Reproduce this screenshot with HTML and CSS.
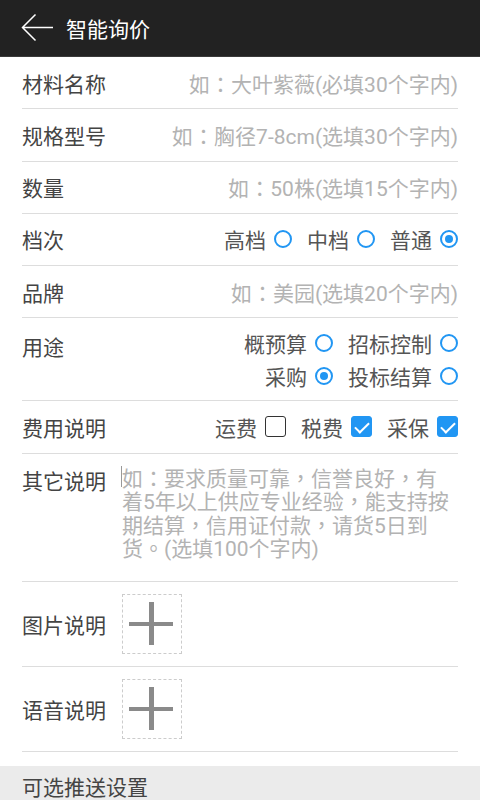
FILE: index.html
```html
<!DOCTYPE html>
<html lang="zh-CN">
<head>
    <meta charset="UTF-8">
    <meta name="viewport" content="width=device-width, initial-scale=1.0">
    <title>智能询价</title>
    <link rel="stylesheet" href="styles.css">
</head>
<body>
    <div class="header">
        <svg class="back" width="34" height="30" viewBox="0 0 34 30">
            <path d="M33 14.5H2.5M15.5 1.5L2.5 14.5l13 13" fill="none" stroke="#fff" stroke-width="1.5"/>
        </svg>
        <h1>智能询价</h1>
    </div>

    <div class="form">
        <div class="row">
            <span class="label">材料名称</span>
            <span class="hint" lang="zh-Hant">如：大叶紫薇(必填30个字内)</span>
        </div>
        <div class="row">
            <span class="label">规格型号</span>
            <span class="hint" lang="zh-Hant">如：胸径7-8cm(选填30个字内)</span>
        </div>
        <div class="row">
            <span class="label">数量</span>
            <span class="hint" lang="zh-Hant">如：50株(选填15个字内)</span>
        </div>
        <div class="row">
            <span class="label">档次</span>
            <div class="options">
                <span class="opt">高档<i class="radio"></i></span>
                <span class="opt">中档<i class="radio"></i></span>
                <span class="opt">普通<i class="radio on"></i></span>
            </div>
        </div>
        <div class="row">
            <span class="label">品牌</span>
            <span class="hint" lang="zh-Hant">如：美园(选填20个字内)</span>
        </div>
        <div class="row tall">
            <span class="label">用途</span>
            <div class="options-grid">
                <span class="opt">概预算<i class="radio"></i></span>
                <span class="opt">招标控制<i class="radio"></i></span>
                <span class="opt">采购<i class="radio on"></i></span>
                <span class="opt">投标结算<i class="radio"></i></span>
            </div>
        </div>
        <div class="row">
            <span class="label">费用说明</span>
            <div class="options">
                <span class="opt">运费<i class="check"></i></span>
                <span class="opt">税费<i class="check on"></i></span>
                <span class="opt">采保<i class="check on"></i></span>
            </div>
        </div>
        <div class="row memo">
            <span class="label">其它说明</span>
            <p class="memo-text" lang="zh-Hant">如：要求质量可靠，信誉良好，有着5年以上供应专业经验，能支持按期结算，信用证付款，请货5日到货。(选填100个字内)</p>
        </div>
        <div class="row media">
            <span class="label">图片说明</span>
            <div class="add"></div>
        </div>
        <div class="row media">
            <span class="label">语音说明</span>
            <div class="add"></div>
        </div>
    </div>

    <div class="section">可选推送设置</div>
</body>
</html>
```

FILE: styles.css
```css
*{
    margin: 0;
    padding: 0;
    box-sizing: border-box;
}

body{
    font-family: "Noto Sans CJK SC", "Noto Sans", sans-serif;
    background: #fff;
    color: #444;
    width: 480px;
    height: 800px;
    overflow: hidden;
}

.header{
    height: 57px;
    background: #222;
    border-bottom: 1px solid #3a3a3a;
    display: flex;
    align-items: center;
    padding-left: 20px;
}

.back{
    margin-right: 12px;
}

.header h1{
    color: #fff;
    font-size: 21px;
    font-weight: 400;
}

.form{
    padding: 0 22px;
}

.row{
    height: 52.25px;
    border-bottom: 1.5px solid #ddd;
    display: flex;
    align-items: center;
    justify-content: space-between;
}

.label{
    font-size: 21px;
    color: #444;
    white-space: nowrap;
}

.hint{
    font-family: Roboto, "Noto Sans CJK TC", sans-serif;
    font-size: 21px;
    color: #b3b3b3;
    white-space: nowrap;
}

.options{
    display: flex;
    gap: 15px;
}

.opt{
    font-size: 21px;
    color: #555;
    display: flex;
    align-items: center;
    gap: 8px;
}

.radio{
    width: 18px;
    height: 18px;
    border: 2.5px solid #2196f3;
    border-radius: 50%;
    display: inline-block;
    position: relative;
}

.radio.on::after{
    content: "";
    position: absolute;
    left: 2.5px;
    top: 2.5px;
    width: 8px;
    height: 8px;
    border-radius: 50%;
    background: #2196f3;
}

.check{
    width: 21px;
    height: 21px;
    border: 1.5px solid #333;
    border-radius: 3px;
    display: inline-block;
    position: relative;
}

.check.on{
    background: #2196f3;
    border-color: #2196f3;
}

.check.on::after{
    content: "";
    position: absolute;
    left: 3px;
    top: 2px;
    width: 12px;
    height: 6px;
    border-left: 2.5px solid #fff;
    border-bottom: 2.5px solid #fff;
    transform: translate(0, 3px) rotate(-45deg);
}

.row.tall{
    height: 83px;
    align-items: flex-start;
    padding-top: 13px;
}

.options-grid{
    display: grid;
    grid-template-columns: auto auto;
    justify-items: end;
    column-gap: 15px;
    row-gap: 3px;
    margin-top: -3px;
}

.row.memo{
    height: 128px;
    align-items: flex-start;
    justify-content: flex-start;
    padding-top: 11px;
}

.memo-text{
    position: relative;
    width: 331px;
    font-family: Roboto, "Noto Sans CJK TC", sans-serif;
    font-size: 21px;
    line-height: 23.5px;
    color: #b3b3b3;
    margin: 3px 0 0 15px;
    padding-left: 1px;
}

.memo-text::before{
    content: "";
    position: absolute;
    left: 0;
    top: -2px;
    width: 1px;
    height: 21px;
    background: #999;
}

.row.media{
    height: 85px;
    justify-content: flex-start;
}

.add{
    width: 60px;
    height: 60px;
    margin-left: 16px;
    border: 1px dashed #ccc;
    position: relative;
}

.add::before,
.add::after{
    content: "";
    position: absolute;
    background: #8a8a8a;
}

.add::before{
    left: 6px;
    right: 8px;
    top: 27px;
    height: 4.5px;
}

.add::after{
    top: 7px;
    bottom: 8px;
    left: 26px;
    width: 4.5px;
}

.section{
    margin-top: 14px;
    height: 40px;
    background: #ebebeb;
    padding: 5px 22px 0;
    font-size: 21px;
    color: #444;
}
```
